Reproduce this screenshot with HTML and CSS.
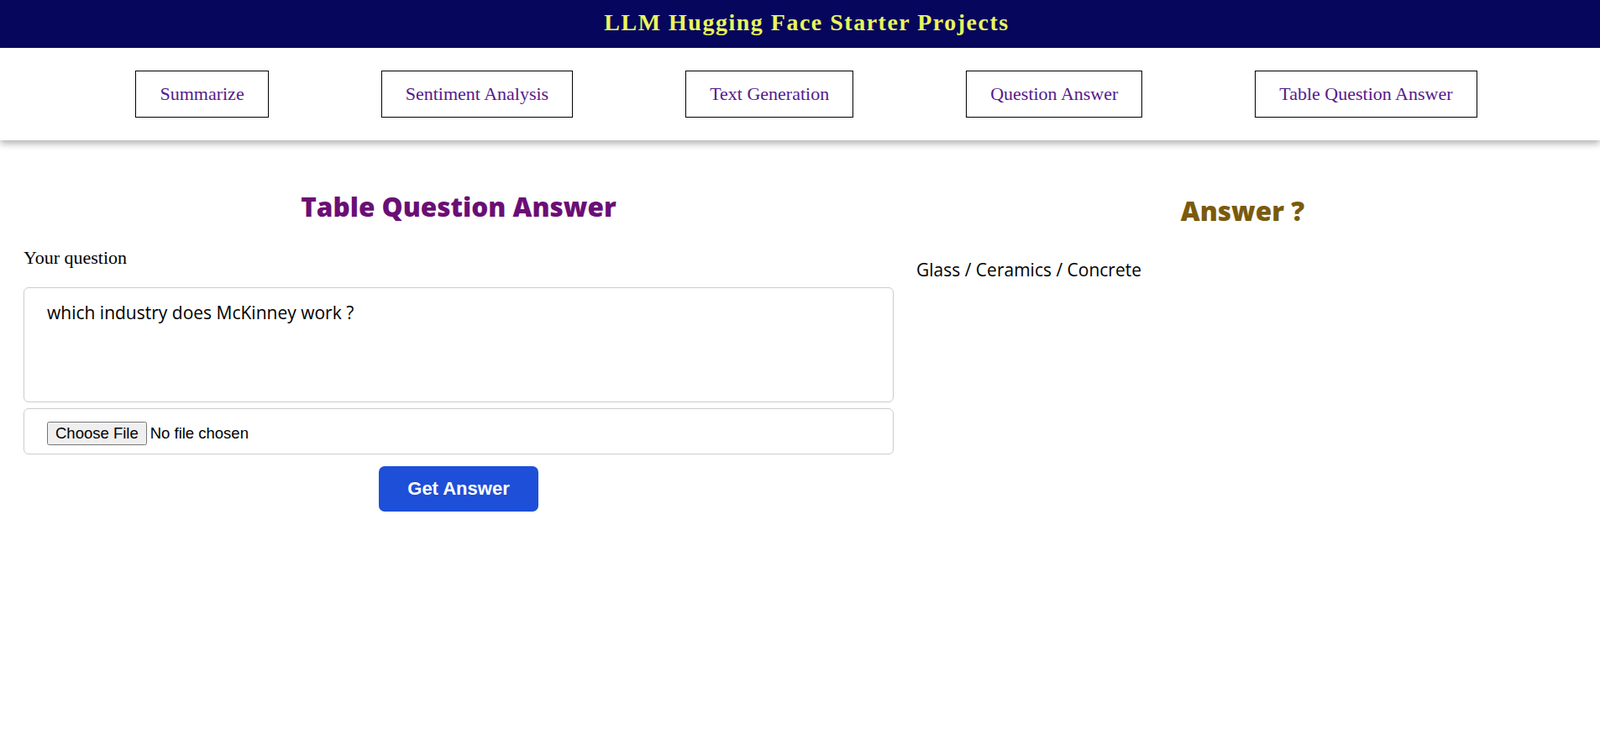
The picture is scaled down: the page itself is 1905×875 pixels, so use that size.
FILE: index.html
```html
<!DOCTYPE html>
<html lang="en">
<head>
    <meta charset="UTF-8">
    <title>LLM Hugging Face Starter Projects</title>
    <link rel="stylesheet" href="styles.css">
</head>
<body>
    <div class="top">
        <h1>LLM Hugging Face Starter Projects</h1>
    </div>
    <div class="menu">
        <a href="#">Summarize</a>
        <a href="#">Sentiment Analysis</a>
        <a href="#">Text Generation</a>
        <a href="#">Question Answer</a>
        <a href="#">Table Question Answer</a>
    </div>
    <div class="content">
        <div class="ask">
            <h2>Table Question Answer</h2>
            <label for="question">Your question</label>
            <textarea id="question">which industry does McKinney work ?</textarea>
            <div class="file-box">
                <input type="file" id="tableFile">
            </div>
            <div class="btn-row">
                <button type="button">Get Answer</button>
            </div>
        </div>
        <div class="result">
            <h2>Answer ?</h2>
            <p>Glass / Ceramics / Concrete</p>
        </div>
    </div>
</body>
</html>
```

FILE: styles.css
```css
* {
    box-sizing: border-box;
}
body {
    margin: 0;
    font-family: "Liberation Serif", serif;
    background: #fff;
}
div.top {
    height: 57px;
    padding: 0 0 4px 16px;
    background: #06065c;
    display: flex;
    align-items: center;
    justify-content: center;
}
div.top h1 {
    margin: 0;
    font: bold 28px "Liberation Serif", serif;
    letter-spacing: 1.5px;
    color: #e9f65b;
}
div.menu {
    height: 110px;
    padding-left: 15px;
    display: flex;
    align-items: center;
    justify-content: center;
    gap: 134px;
    background: #fff;
    box-shadow: 0 4px 8px rgba(0, 0, 0, 0.3);
}
div.menu a {
    border: 1px solid #000;
    padding: 15px 28px;
    font-size: 22px;
    line-height: 24px;
    color: #551a8b;
    text-decoration: none;
}
div.content {
    display: grid;
    grid-template-columns: 4fr 3fr;
    column-gap: 27px;
    padding: 0 37px 0 28px;
}
div.ask h2,
div.result h2 {
    font: 800 31.5px "Open Sans", sans-serif;
    text-align: center;
}
div.ask h2 {
    color: #6b0e75;
    margin: 57px 0 27px;
}
div.result h2 {
    color: #7a5a0c;
    margin: 62px 0 35px;
}
div.ask label {
    display: block;
    font-size: 22px;
    margin-bottom: 22px;
}
textarea {
    display: block;
    width: 100%;
    height: 137px;
    padding: 15px 27px;
    border: 1px solid #ccc;
    border-radius: 6px;
    font: 21px "Open Sans", sans-serif;
    color: #000;
    resize: none;
}
div.file-box {
    margin-top: 7px;
    padding: 15px 27px 10px;
    border: 1px solid #ccc;
    border-radius: 6px;
}
div.file-box input {
    font: 18.5px "Liberation Sans", sans-serif;
}
div.file-box input::file-selector-button {
    padding: 1px 8px;
}
div.btn-row {
    margin-top: 14px;
    text-align: center;
}
div.btn-row button {
    width: 190px;
    height: 54px;
    border: none;
    border-radius: 7px;
    background: #1d4fd8;
    color: #fff;
    font: bold 22px "Liberation Sans", sans-serif;
}
div.result p {
    margin: 0;
    font: 21px "Open Sans", sans-serif;
}
```
